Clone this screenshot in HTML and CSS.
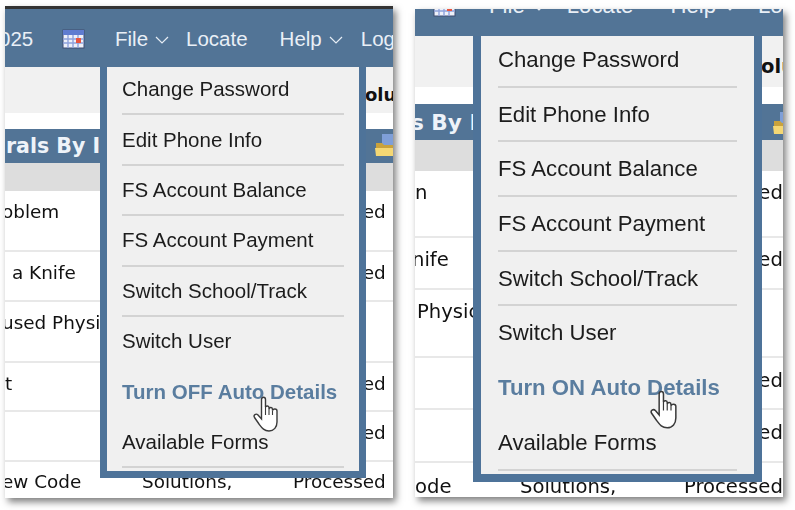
FILE: index.html
```html
<!DOCTYPE html>
<html lang="en">
<head>
  <meta charset="UTF-8">
  <meta name="viewport" content="width=device-width, initial-scale=1.0">
  <title>Auto Details menu</title>
  <link rel="stylesheet" href="styles.css">
</head>
<body>
  <main class="shots">

    <section class="panel panel-off">
      <div class="topbar">
        <span class="date">025</span>
        <svg class="cal" viewBox="0 0 23 21">
          <rect x="1" y="2" width="21" height="18" fill="#eef1fa" stroke="#3f4d70"/>
          <rect x="1" y="2" width="21" height="5" fill="#5f7cd0"/>
          <path d="M1 11h21M1 15h21M6 7v13M11 7v13M16 7v13" stroke="#8fa3dc" stroke-width="1.4"/>
          <rect x="14" y="10" width="5" height="5" fill="#e8553f"/>
        </svg>
        <span class="nav nav-file">File</span>
        <svg class="chev" viewBox="0 0 14 8"><path d="M1 1l6 6 6-6" fill="none" stroke="#e6edf5" stroke-width="1.2"/></svg>
        <span class="nav nav-locate">Locate</span>
        <span class="nav nav-help">Help</span>
        <svg class="chev" viewBox="0 0 14 8"><path d="M1 1l6 6 6-6" fill="none" stroke="#e6edf5" stroke-width="1.2"/></svg>
        <span class="nav nav-log">Log</span>
      </div>
      <div class="subbar">
        <div class="subfill"><b class="subtitle">Solu</b></div>
      </div>
      <div class="band">
        <span class="band-title">rals By I</span>
        <svg class="folder" viewBox="0 0 18 23">
          <rect x="7" y="0" width="11" height="11" fill="#7f9fd8"/>
          <path d="M1 9h6l2 2h9v11H1z" fill="#c9a23c"/>
          <path d="M0 14h18v8H1z" fill="#f4d774"/>
        </svg>
      </div>
      <div class="thead"></div>
      <div class="row r1"><span class="name clip">oblem</span><span></span><span>Processed</span></div>
      <div class="row r2"><span class="name indent">a Knife</span><span></span><span>Processed</span></div>
      <div class="row r3"><span class="name clip">used Physician</span></div>
      <div class="row r4"><span class="name">t</span><span></span><span>Processed</span></div>
      <div class="row r5"><span></span><span></span><span>Processed</span></div>
      <div class="row r6"><span class="name clip">ew Code</span><span>Solutions,</span><span>Processed</span></div>

      <nav class="menu">
        <ul class="menu-list">
          <li>Change Password</li>
          <li>Edit Phone Info</li>
          <li>FS Account Balance</li>
          <li>FS Account Payment</li>
          <li>Switch School/Track</li>
          <li class="plain">Switch User</li>
          <li class="plain active">Turn OFF Auto Details</li>
          <li>Available Forms</li>
        </ul>
      </nav>
      <svg class="hand" viewBox="0 0 26 36">
        <path d="M8.5 3.5C8.5.5 12.5.5 12.5 3.5V11C13 9.5 16 9.5 16 11.5V13C16.5 11 19.5 11 19.5 13.5V14.5C20 12.5 24 12.5 24 15V26C24 31 21 35 16 35C11 35 9 32 6 28L1.5 21.5C0 19 3 17 5 19L8.5 23Z" fill="#fff" stroke="#3a3a3a" stroke-width="1.4"/>
        <path d="M12.5 11V19M16 13V19M19.5 14.5V19" fill="none" stroke="#3a3a3a" stroke-width="1.1"/>
      </svg>
    </section>

    <section class="panel panel-on">
      <div class="topbar">
        <svg class="cal" viewBox="0 0 23 21">
          <rect x="1" y="2" width="21" height="18" fill="#eef1fa" stroke="#3f4d70"/>
          <rect x="1" y="2" width="21" height="5" fill="#5f7cd0"/>
          <path d="M1 11h21M1 15h21M6 7v13M11 7v13M16 7v13" stroke="#8fa3dc" stroke-width="1.4"/>
          <rect x="14" y="10" width="5" height="5" fill="#e8553f"/>
        </svg>
        <span class="nav nav-file">File</span>
        <svg class="chev" viewBox="0 0 14 8"><path d="M1 1l6 6 6-6" fill="none" stroke="#e6edf5" stroke-width="1.2"/></svg>
        <span class="nav nav-locate">Locate</span>
        <span class="nav nav-help">Help</span>
        <svg class="chev" viewBox="0 0 14 8"><path d="M1 1l6 6 6-6" fill="none" stroke="#e6edf5" stroke-width="1.2"/></svg>
        <span class="nav nav-log">Log</span>
      </div>
      <div class="subbar">
        <div class="subfill"><b class="subtitle">Solu</b></div>
      </div>
      <div class="band">
        <span class="band-title">s By I</span>
        <svg class="folder" viewBox="0 0 18 23">
          <rect x="7" y="0" width="11" height="11" fill="#7f9fd8"/>
          <path d="M1 9h6l2 2h9v11H1z" fill="#c9a23c"/>
          <path d="M0 14h18v8H1z" fill="#f4d774"/>
        </svg>
      </div>
      <div class="thead"></div>
      <div class="row r1"><span class="name">n</span><span></span><span>Processed</span></div>
      <div class="row r2"><span class="name clip">nife</span><span></span><span>Processed</span></div>
      <div class="row r3"><span class="name indent">Physician</span></div>
      <div class="row r4"><span></span><span></span><span>Processed</span></div>
      <div class="row r5"><span></span><span></span><span>Processed</span></div>
      <div class="row r6"><span class="name">ode</span><span>Solutions,</span><span>Processed</span></div>

      <nav class="menu">
        <ul class="menu-list">
          <li>Change Password</li>
          <li>Edit Phone Info</li>
          <li>FS Account Balance</li>
          <li>FS Account Payment</li>
          <li>Switch School/Track</li>
          <li class="plain">Switch User</li>
          <li class="plain active">Turn ON Auto Details</li>
          <li>Available Forms</li>
        </ul>
      </nav>
      <svg class="hand" viewBox="0 0 26 36">
        <path d="M8.5 3.5C8.5.5 12.5.5 12.5 3.5V11C13 9.5 16 9.5 16 11.5V13C16.5 11 19.5 11 19.5 13.5V14.5C20 12.5 24 12.5 24 15V26C24 31 21 35 16 35C11 35 9 32 6 28L1.5 21.5C0 19 3 17 5 19L8.5 23Z" fill="#fff" stroke="#3a3a3a" stroke-width="1.4"/>
        <path d="M12.5 11V19M16 13V19M19.5 14.5V19" fill="none" stroke="#3a3a3a" stroke-width="1.1"/>
      </svg>
    </section>

  </main>
</body>
</html>
```

FILE: styles.css
```css
html, body{
  margin: 0;
  height: 100%;
  background-color: #fff;
  overflow: hidden;
}
.shots{
  display: flex;
  align-items: flex-start;
  gap: 22px;
  padding-left: 5px;
}

.panel{
  position: relative;
  overflow: hidden;
  background-color: #fff;
  box-shadow: 3px 4px 7px rgba(0, 0, 0, 0.5);
  filter: blur(0.4px);
  font-family: "Liberation Sans", Arial, sans-serif;
}
.panel-off{
  width: 388px;
  height: 492px;
  margin-top: 6px;
  border-top: 3px solid #333;
  box-sizing: border-box;
}
.panel-on{
  width: 368px;
  height: 488px;
  margin-top: 9px;
}

/* top nav */
.topbar{
  display: flex;
  align-items: flex-end;
  overflow: hidden;
  background-color: #527496;
  color: #e9eff6;
}
.panel-off .topbar{
  height: 58px;
  padding-bottom: 16px;
  font-size: 20.5px;
  box-sizing: border-box;
}
.panel-on .topbar{
  height: 27px;
  padding-bottom: 18px;
  font-size: 22.2px;
  box-sizing: border-box;
}
.nav, .date{
  flex: none;
  line-height: 24px;
}
.cal{
  flex: none;
  width: 23px;
  height: 21px;
}
.chev{
  flex: none;
  width: 14px;
  height: 8px;
  margin-left: 7px;
  margin-bottom: 7px;
}
.date{
  width: 63px;
  margin-left: -6px;
}
.panel-off .cal{ margin-bottom: 2px; }
.panel-off .nav-file{ margin-left: 30px; }
.panel-off .nav-locate{ margin-left: 17px; }
.panel-off .nav-help{ margin-left: 32px; }
.panel-off .nav-log{ margin-left: 18px; }
.panel-on .cal{ margin-left: 18px; margin-bottom: 1px; }
.panel-on .nav-file{ margin-left: 33px; }
.panel-on .nav-locate{ margin-left: 21px; }
.panel-on .nav-help{ margin-left: 37px; }
.panel-on .nav-log{ margin-left: 21px; }

/* white strip under the nav */
.subbar{
  background-color: #fff;
}
.panel-off .subbar{ height: 62px; }
.panel-on .subbar{ height: 68px; }
.subfill{
  background-color: #f1f1f1;
  font-family: "DejaVu Sans", sans-serif;
  color: #111;
}
.panel-off .subfill{
  height: 46px;
  line-height: 56px;
  font-size: 18px;
}
.panel-on .subfill{
  height: 51px;
  line-height: 62px;
  font-size: 19.5px;
}
.subtitle{
  display: block;
  white-space: nowrap;
}
.panel-off .subtitle{ margin-left: 347px; }
.panel-on .subtitle{ margin-left: 332px; }

/* section title band */
.band{
  display: flex;
  align-items: center;
  justify-content: space-between;
  background-color: #527496;
  color: #eef3f9;
  font-family: "DejaVu Sans", sans-serif;
  font-weight: bold;
}
.panel-off .band{
  height: 34px;
  font-size: 20.5px;
}
.panel-on .band{
  height: 36px;
  font-size: 21.6px;
}
.band-title{
  white-space: nowrap;
  margin-left: 1px;
}
.panel-on .band-title{
  margin-left: -4px;
}
.folder{
  flex: none;
  width: 18px;
  height: 23px;
}
.panel-off .folder{
  margin-top: -2px;
}
.panel-on .folder{
  margin-right: -8px;
  margin-top: 3px;
}

.thead{
  background-color: #ddd;
}
.panel-off .thead{ height: 28px; }
.panel-on .thead{ height: 31px; }

/* table rows */
.row{
  display: grid;
  box-sizing: border-box;
  border-bottom: 2px solid #e8e8e8;
  font-family: "DejaVu Sans", sans-serif;
  color: #111;
  white-space: nowrap;
}
.panel-off .row{
  grid-template-columns: 137px 151px 1fr;
  padding-top: 10px;
  font-size: 18.4px;
  line-height: 22px;
}
.panel-on .row{
  grid-template-columns: 105px 164px 1fr;
  padding-top: 10px;
  font-size: 19.6px;
  line-height: 24px;
}
.panel-off .r1{ height: 61px; }
.panel-off .r2{ height: 50px; }
.panel-off .r3{ height: 61px; }
.panel-off .r4{ height: 49px; }
.panel-off .r5{ height: 50px; }
.panel-off .r6{ height: 60px; border-bottom: none; padding-top: 9px; }
.panel-on .r1{ height: 67px; }
.panel-on .r2{ height: 52px; }
.panel-on .r3{ height: 68px; }
.panel-on .r4{ height: 52px; padding-top: 11px; }
.panel-on .r5{ height: 53px; padding-top: 11px; }
.panel-on .r6{ height: 60px; border-bottom: none; padding-top: 12px; }
.name.clip{ margin-left: -3px; }
.name.indent{ margin-left: 7px; }
.panel-on .name.indent{ margin-left: 2px; }

/* dropdown */
.menu{
  position: absolute;
  overflow: hidden;
  box-sizing: border-box;
  border: solid #4e7399;
  border-top: none;
  background-color: #f0f0f0;
  color: #1c1c1c;
}
.panel-off .menu{
  left: 95px;
  top: 58px;
  width: 266px;
  height: 411px;
  border-width: 0 7px 7px 7px;
  font-size: 20.5px;
}
.panel-on .menu{
  left: 58px;
  top: 27px;
  width: 289px;
  height: 446px;
  border-width: 0 8px 8px 8px;
  font-size: 22.2px;
}
.menu-list{
  list-style: none;
  margin: 0;
  padding: 0;
}
.panel-off .menu-list{ margin: -2px 15px 0; }
.panel-on .menu-list{ margin: -3px 17px 0; }
.menu-list li{
  display: flex;
  align-items: center;
  box-sizing: border-box;
  border-bottom: 2px solid #d3d3d3;
  white-space: nowrap;
}
.panel-off .menu-list li{ height: 50.4px; }
.panel-on .menu-list li{ height: 54.7px; padding-top: 1px; }
.menu-list li.plain{
  border-bottom-color: transparent;
}
.menu-list li.active{
  color: #5a7d9f;
  font-weight: bold;
}

/* mouse pointer over the menu */
.hand{
  position: absolute;
}
.panel-off .hand{
  left: 248px;
  top: 387px;
  width: 26px;
  height: 36px;
}
.panel-on .hand{
  left: 235px;
  top: 381px;
  width: 28px;
  height: 39px;
}
```
